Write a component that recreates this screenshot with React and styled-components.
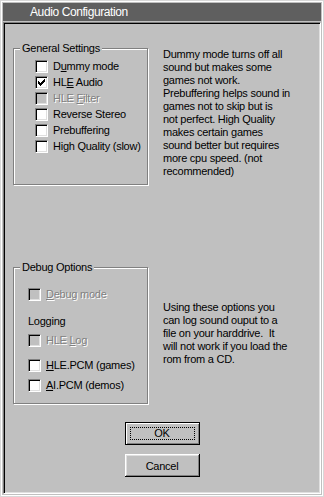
import React from "react";
import styled, { createGlobalStyle } from "styled-components";

const Global = createGlobalStyle`
  html, body { margin: 0; padding: 0; background: #c0c0c0; }
  body { font-family: "Liberation Sans", Arial, sans-serif; }
`;

const Window = styled.div`
  width: 324px;
  height: 497px;
  box-sizing: border-box;
  background: #c0c0c0;
  border: 1px solid #d8d8d8;
  box-shadow: inset 1px 1px 0 #ffffff, inset -1px -1px 0 #ffffff;
  padding: 2px 2px 2px 2px;
  display: flex;
  flex-direction: column;
`;

const TitleBar = styled.div`
  height: 18px;
  flex: none;
  background: #5f5f5f;
  color: #ffffff;
  font-size: 12px;
  line-height: 18px;
  letter-spacing: -0.4px;
  padding-left: 27px;
  white-space: nowrap;
`;

const Client = styled.div`
  margin-top: 1px;
  flex: 1;
  box-sizing: border-box;
  border-top: 1px solid #808080;
  border-left: 1px solid #808080;
  border-right: 1px solid #ffffff;
  border-bottom: 1px solid #ffffff;
  box-shadow: inset 1px 1px 0 #000000, inset -1px -1px 0 #dfdfdf;
  padding: 25px 8px 0 9px;
  display: flex;
  flex-direction: column;
  font-size: 11px;
  letter-spacing: -0.25px;
  color: #000;
`;

const Section = styled.div`
  display: flex;
  align-items: flex-start;
  gap: 15px;
  margin-top: ${(p) => p.$top}px;
`;

const Group = styled.div`
  position: relative;
  width: 135px;
  height: 137px;
  flex: none;
  box-sizing: border-box;
  border: 1px solid #808080;
  box-shadow: inset 1px 1px 0 #ffffff, 1px 1px 0 #ffffff;
  padding: ${(p) => p.$pad};
  display: flex;
  flex-direction: column;
`;

const Legend = styled.span`
  position: absolute;
  top: -9px;
  left: 6px;
  padding: 0 2px;
  background: #c0c0c0;
  line-height: 16px;
  white-space: nowrap;
`;

const Row = styled.label`
  display: flex;
  align-items: center;
  gap: 5px;
  height: 16px;
  margin-top: ${(p) => p.$mt || 0}px;
  white-space: nowrap;
  color: ${(p) => (p.$disabled ? "#808080" : "#000")};
  text-shadow: ${(p) => (p.$disabled ? "1px 1px 0 #ffffff" : "none")};
`;

const PlainLabel = styled.div`
  height: 16px;
  line-height: 16px;
  margin-top: ${(p) => p.$mt || 0}px;
`;

const Box = styled.span`
  width: 13px;
  height: 13px;
  flex: none;
  box-sizing: border-box;
  border-top: 1px solid #808080;
  border-left: 1px solid #808080;
  border-right: 1px solid #ffffff;
  border-bottom: 1px solid #ffffff;
  box-shadow: inset 1px 1px 0 #000000, inset -1px -1px 0 #dfdfdf;
  background: ${(p) => (p.$disabled ? "#c0c0c0" : "#ffffff")};
  display: flex;
  align-items: center;
  justify-content: center;
`;

const U = styled.span`
  text-decoration: underline;
`;

const Description = styled.div`
  line-height: 13px;
  white-space: nowrap;
  margin-top: ${(p) => p.$top}px;
`;

const Buttons = styled.div`
  display: flex;
  flex-direction: column;
  align-items: center;
  gap: 9px;
  margin-top: 18px;
  padding-right: 1px;
`;

const Button = styled.div`
  width: 75px;
  height: 23px;
  box-sizing: border-box;
  display: flex;
  align-items: center;
  justify-content: center;
  font-size: 11px;
  background: #c0c0c0;
  ${(p) =>
    p.$default
      ? `border: 1px solid #000;
         box-shadow: inset 1px 1px 0 #ffffff, inset -1px -1px 0 #808080;`
      : `box-shadow: inset -1px -1px 0 #000000, inset 1px 1px 0 #ffffff, inset -2px -2px 0 #808080, inset 2px 2px 0 #dfdfdf;`}
`;

const Focus = styled.span`
  width: 65px;
  height: 13px;
  box-sizing: border-box;
  border: 1px dotted #000;
  display: flex;
  align-items: center;
  justify-content: center;
  line-height: 11px;
`;

const Check = () => (
  <svg width="7" height="7" viewBox="0 0 7 7" shapeRendering="crispEdges">
    <rect x="0" y="2" width="1" height="3" fill="#000" />
    <rect x="1" y="3" width="1" height="3" fill="#000" />
    <rect x="2" y="4" width="1" height="3" fill="#000" />
    <rect x="3" y="3" width="1" height="3" fill="#000" />
    <rect x="4" y="2" width="1" height="3" fill="#000" />
    <rect x="5" y="1" width="1" height="3" fill="#000" />
    <rect x="6" y="0" width="1" height="3" fill="#000" />
  </svg>
);

const CheckRow = ({ checked, disabled, mt, children }) => (
  <Row $disabled={disabled} $mt={mt}>
    <Box $disabled={disabled}>{checked ? <Check /> : null}</Box>
    <span>{children}</span>
  </Row>
);

export default function App() {
  return (
    <>
      <Global />
      <Window>
        <TitleBar>Audio Configuration</TitleBar>
        <Client>
          <Section $top={0}>
            <Group $pad="9px 0 0 21px">
              <Legend>General Settings</Legend>
              <CheckRow>
                D<U>u</U>mmy mode
              </CheckRow>
              <CheckRow checked>
                HL<U>E</U> Audio
              </CheckRow>
              <CheckRow disabled>
                HLE <U>F</U>ilter
              </CheckRow>
              <CheckRow>Reverse Stereo</CheckRow>
              <CheckRow>Prebuffering</CheckRow>
              <CheckRow>High Quality (slow)</CheckRow>
            </Group>
            <Description $top={0}>
              Dummy mode turns off all
              <br />
              sound but makes some
              <br />
              games not work.
              <br />
              Prebuffering helps sound in
              <br />
              games not to skip but is
              <br />
              not perfect. High Quality
              <br />
              makes certain games
              <br />
              sound better but requires
              <br />
              more cpu speed. (not
              <br />
              recommended)
            </Description>
          </Section>
          <Section $top={82}>
            <Group $pad="18px 0 0 14px">
              <Legend>Debug Options</Legend>
              <CheckRow disabled>
                <U>D</U>ebug mode
              </CheckRow>
              <PlainLabel $mt={11}>Logging</PlainLabel>
              <CheckRow disabled mt={3}>
                HLE <U>L</U>og
              </CheckRow>
              <CheckRow mt={9}>
                <U>H</U>LE.PCM (games)
              </CheckRow>
              <CheckRow mt={4}>
                <U>A</U>I.PCM (demos)
              </CheckRow>
            </Group>
            <Description $top={34}>
              Using these options you
              <br />
              can log sound ouput to a
              <br />
              {"file on your harddrive.\u00a0 It"}
              <br />
              will not work if you load the
              <br />
              rom from a CD.
            </Description>
          </Section>
          <Buttons>
            <Button $default>
              <Focus>OK</Focus>
            </Button>
            <Button>Cancel</Button>
          </Buttons>
        </Client>
      </Window>
    </>
  );
}
